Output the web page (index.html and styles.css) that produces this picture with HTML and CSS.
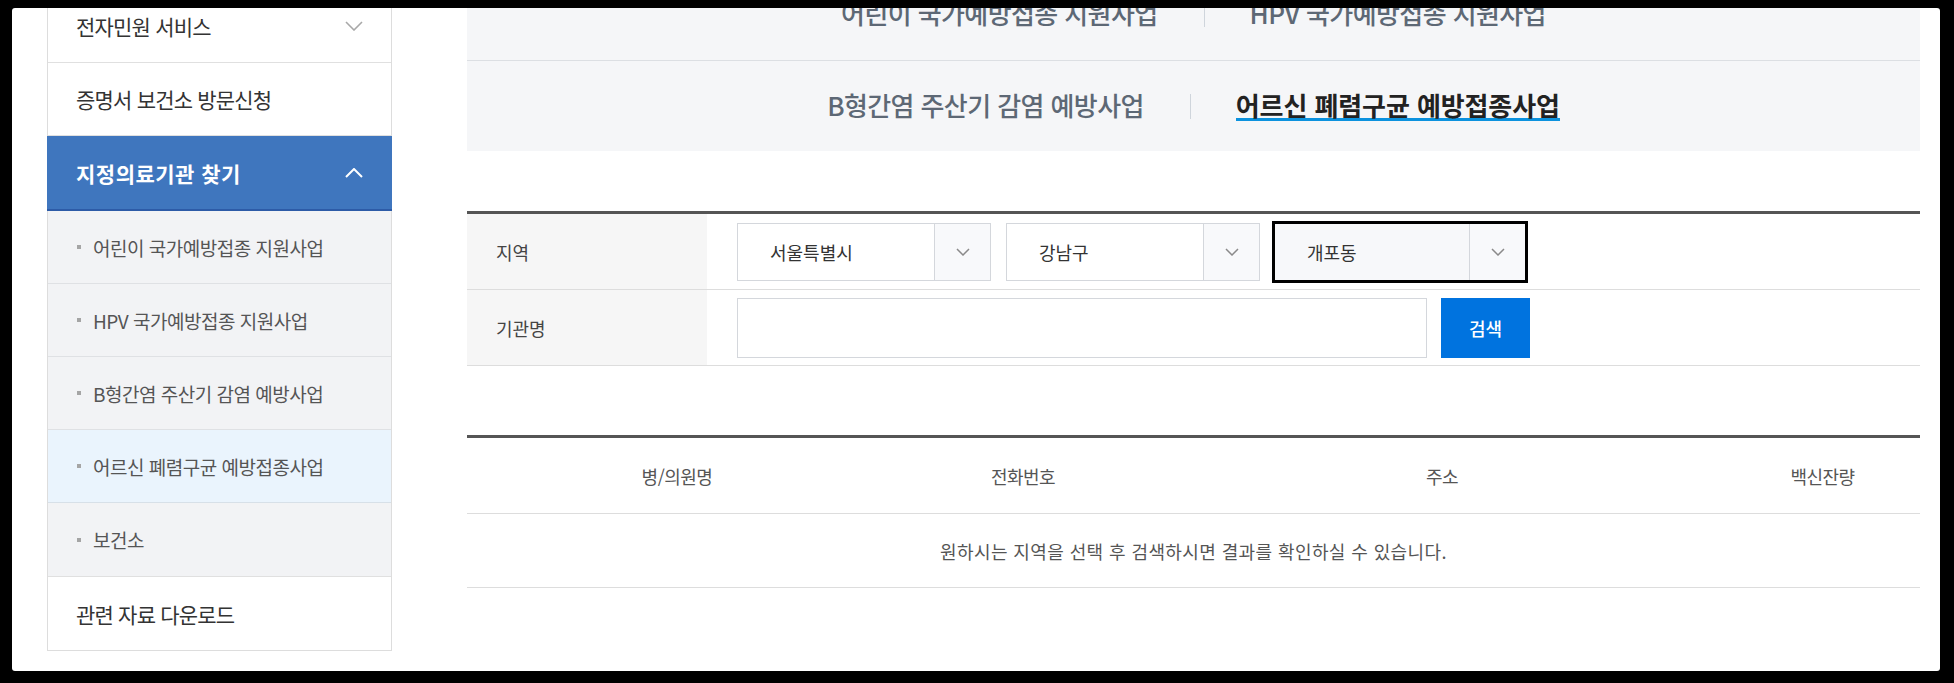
FILE: index.html
```html
<!DOCTYPE html>
<html lang="ko">
<head>
    <meta charset="UTF-8">
    <meta name="viewport" content="width=device-width, initial-scale=1.0">
    <title>지정의료기관 찾기</title>
    <link rel="stylesheet" href="styles.css">
</head>
<body>

    <div class="screen">
        <div class="page">

            <aside class="lnb">
                <ul class="lnb-list">
                    <li class="lnb-item">
                        <a href="#">전자민원 서비스
                            <svg class="lnb-arrow" width="18" height="10" viewBox="0 0 18 10"><polyline points="1,1 9,9 17,1" /></svg>
                        </a>
                    </li>
                    <li class="lnb-item"><a href="#">증명서 보건소 방문신청</a></li>
                    <li class="lnb-item open">
                        <a href="#" class="current">지정의료기관 찾기
                            <svg class="lnb-arrow" width="18" height="10" viewBox="0 0 18 10"><polyline points="1,9 9,1 17,9" /></svg>
                        </a>
                        <ul class="lnb-sub">
                            <li><a href="#">어린이 국가예방접종 지원사업</a></li>
                            <li><a href="#">HPV 국가예방접종 지원사업</a></li>
                            <li><a href="#">B형간염 주산기 감염 예방사업</a></li>
                            <li class="on"><a href="#">어르신 폐렴구균 예방접종사업</a></li>
                            <li><a href="#">보건소</a></li>
                        </ul>
                    </li>
                    <li class="lnb-item"><a href="#">관련 자료 다운로드</a></li>
                </ul>
            </aside>

            <main class="content">
                <div class="tab-box">
                    <ul class="tab-row">
                        <li><a href="#">어린이 국가예방접종 지원사업</a></li>
                        <li><a href="#">HPV 국가예방접종 지원사업</a></li>
                    </ul>
                    <ul class="tab-row">
                        <li><a href="#">B형간염 주산기 감염 예방사업</a></li>
                        <li class="on"><a href="#">어르신 폐렴구균 예방접종사업</a></li>
                    </ul>
                </div>

                <div class="search">
                    <div class="search-row">
                        <div class="search-label">지역</div>
                        <div class="search-field">
                            <div class="select">
                                <span class="select-text">서울특별시</span>
                                <span class="select-btn"><svg width="14" height="8" viewBox="0 0 14 8"><polyline points="1,1 7,7 13,1" /></svg></span>
                            </div>
                            <div class="select">
                                <span class="select-text">강남구</span>
                                <span class="select-btn"><svg width="14" height="8" viewBox="0 0 14 8"><polyline points="1,1 7,7 13,1" /></svg></span>
                            </div>
                            <div class="select focus">
                                <span class="select-text">개포동</span>
                                <span class="select-btn"><svg width="14" height="8" viewBox="0 0 14 8"><polyline points="1,1 7,7 13,1" /></svg></span>
                            </div>
                        </div>
                    </div>
                    <div class="search-row">
                        <div class="search-label">기관명</div>
                        <div class="search-field">
                            <input type="text" class="search-input">
                            <button type="button" class="search-btn">검색</button>
                        </div>
                    </div>
                </div>

                <div class="result">
                    <div class="result-head">
                        <span>병/의원명</span>
                        <span>전화번호</span>
                        <span>주소</span>
                        <span>백신잔량</span>
                    </div>
                    <div class="result-empty">원하시는 지역을 선택 후 검색하시면 결과를 확인하실 수 있습니다.</div>
                </div>
            </main>

        </div>
    </div>

</body>
</html>
```

FILE: styles.css
```css
* {
    box-sizing: border-box;
}
html, body {
    margin: 0;
    height: 683px;
    overflow: hidden;
}
body {
    background-color: #000;
    font-family: "Noto Sans CJK KR", "Noto Sans", sans-serif;
    color: #333;
}
ul {
    list-style: none;
    margin: 0;
    padding: 0;
}
a {
    color: inherit;
    text-decoration: none;
}

.screen {
    margin: 8px 14px 0 12px;
    height: 663px;
    background: #fff;
    overflow: hidden;
    border-radius: 3px;
}
.page {
    display: flex;
    gap: 75px;
    padding: 0 20px 0 35px;
    margin-top: -39px;
}

/* left menu */
.lnb {
    width: 345px;
    flex-shrink: 0;
    margin-top: 21px;
    border: 1px solid #dddddd;
    border-top: 0;
}
.lnb-item > a {
    display: flex;
    align-items: center;
    justify-content: space-between;
    height: 73px;
    padding: 0 28px 0 28px;
    border-bottom: 1px solid #e0e0e0;
    font-size: 21px;
    letter-spacing: -0.8px;
    color: #333;
}
.lnb-item:last-child > a {
    border-bottom: 0;
}
.lnb-arrow {
    fill: none;
    stroke: #a8a8a8;
    stroke-width: 1.6;
}
.lnb-item > a.current {
    height: 75px;
    margin: 0 -1px;
    padding-left: 29px;
    padding-right: 29px;
    background: #3f76be;
    border-bottom: 2px solid #2d5ba7;
    color: #fff;
    font-weight: bold;
    letter-spacing: 0.5px;
}
.current .lnb-arrow {
    stroke: #fff;
    stroke-width: 2;
}
.lnb-sub {
    background: #f2f3f5;
    border-bottom: 1px solid #e0e0e0;
}
.lnb-sub li a {
    display: flex;
    align-items: center;
    height: 73px;
    padding-left: 29px;
    border-bottom: 1px solid #dfe1e4;
    font-size: 19px;
    letter-spacing: -0.5px;
    color: #555;
}
.lnb-sub li:last-child a {
    border-bottom: 0;
}
.lnb-sub li a::before {
    content: "";
    width: 4px;
    height: 4px;
    margin-right: 12px;
    background: #a5a5a5;
}
.lnb-sub li.on a {
    background: #eaf4fd;
    border-bottom-color: #d7e0e8;
}

/* content */
.content {
    flex: 1;
}
.tab-box {
    background: #f5f6f8;
}
.tab-row {
    display: flex;
    justify-content: center;
    align-items: center;
    height: 91px;
}
.tab-row + .tab-row {
    height: 91px;
    border-top: 1px solid #dcdfe3;
}
.tab-row li {
    display: flex;
    align-items: center;
}
.tab-row li + li::before {
    content: "";
    width: 1px;
    height: 25px;
    margin: 0 45px 0 46px;
    background: #cfd5dc;
}
.tab-row a {
    font-size: 26px;
    line-height: 26px;
    letter-spacing: -0.6px;
    font-weight: 500;
    color: #5d6875;
    border-bottom: 3px solid transparent;
}
.tab-row li.on a {
    color: #222;
    font-weight: bold;
    letter-spacing: -0.1px;
    border-bottom-color: #0c92de;
}

/* search form */
.search {
    margin-top: 60px;
    border-top: 3px solid #555;
}
.search-row {
    display: flex;
    height: 76px;
    border-bottom: 1px solid #dddddd;
}
.search-label {
    display: flex;
    align-items: center;
    width: 240px;
    padding-left: 29px;
    background: #f6f6f6;
    font-size: 18px;
    color: #444;
}
.search-field {
    display: flex;
    align-items: center;
    gap: 15px;
    padding-left: 30px;
}
.select {
    display: flex;
    width: 254px;
    height: 58px;
    border: 1px solid #d4d7dc;
    background: #fff;
}
.select-text {
    flex: 1;
    display: flex;
    align-items: center;
    padding-left: 32px;
    font-size: 18px;
    color: #333;
}
.select-btn {
    display: flex;
    align-items: center;
    justify-content: center;
    width: 56px;
    border-left: 1px solid #d4d7dc;
    background: #f8f9fb;
}
.select-btn svg {
    fill: none;
    stroke: #8a8a8a;
    stroke-width: 1.5;
}
.select.focus {
    width: 252px;
    margin-left: -1px;
    background: #f7f8fa;
    outline: 3px solid #000;
    outline-offset: -1px;
}
.search-input {
    width: 690px;
    height: 60px;
    border: 1px solid #d4d7dc;
    background: #fff;
}
.search-btn {
    width: 89px;
    height: 60px;
    margin-left: -1px;
    border: 0;
    background: #0073df;
    color: #fff;
    font-family: inherit;
    font-size: 18px;
    font-weight: 500;
}

/* result table */
.result {
    margin-top: 69px;
    border-top: 3px solid #555;
}
.result-head {
    display: grid;
    grid-template-columns: 420px 272px 1fr 195px;
    align-items: center;
    height: 76px;
    border-bottom: 1px solid #dddddd;
    text-align: center;
    font-size: 18px;
    letter-spacing: -0.5px;
    color: #555;
}
.result-empty {
    display: flex;
    align-items: center;
    justify-content: center;
    height: 74px;
    border-bottom: 1px solid #dddddd;
    font-size: 18px;
    letter-spacing: 0.4px;
    color: #555;
}
```
